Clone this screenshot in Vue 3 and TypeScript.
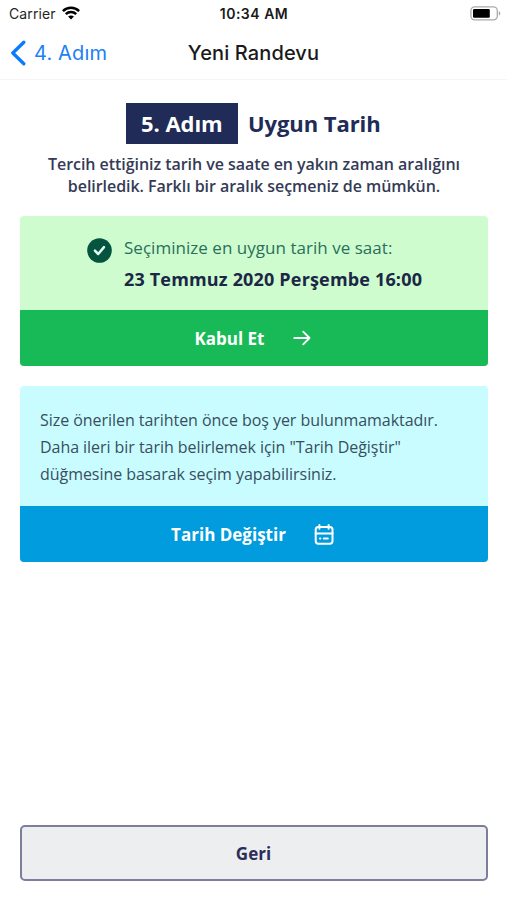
<script setup lang="ts">
interface Step {
  previous: string
  current: string
  title: string
}

const step: Step = { previous: '4. Adım', current: '5. Adım', title: 'Uygun Tarih' }
const introLines: string[] = [
  'Tercih ettiğiniz tarih ve saate en yakın zaman aralığını',
  'belirledik. Farklı bir aralık seçmeniz de mümkün.',
]
const noticeLines: string[] = [
  'Size önerilen tarihten önce boş yer bulunmamaktadır.',
  'Daha ileri bir tarih belirlemek için "Tarih Değiştir"',
  'düğmesine basarak seçim yapabilirsiniz.',
]
const suggestedDate = '23 Temmuz 2020 Perşembe 16:00'
</script>

<template>
  <div class="screen">
    <header class="top">
      <div class="status">
        <div class="carrier">
          <span>Carrier</span>
          <svg class="wifi" width="18" height="14" viewBox="0 0 18 14" fill="none" stroke="#000" stroke-width="2.5">
            <path d="M0.9 5.1C5.4 0.6 12.6 0.6 17.1 5.1" />
            <path d="M3.8 8.1C6.7 5.3 11.3 5.3 14.2 8.1" />
            <path d="M9 13.5L6.1 10.6C7.7 9.1 10.3 9.1 11.9 10.6Z" fill="#000" stroke="none" />
          </svg>
        </div>
        <span class="clock">10:34 AM</span>
        <div class="power">
          <svg width="31" height="15" viewBox="0 0 31 15">
            <rect x="0.9" y="0.9" width="26.4" height="13" rx="3.8" fill="#fff" stroke="#aaa" stroke-width="1.3" />
            <rect x="3" y="3" width="16.8" height="8.8" rx="1.3" fill="#000" />
            <path d="M28.8 5.2C30.8 5.8 30.8 9 28.8 9.6Z" fill="#aaa" />
          </svg>
        </div>
      </div>
      <nav class="nav">
        <a class="back">
          <svg width="16" height="26" viewBox="0 0 16 26" fill="none" stroke="#0a7aff" stroke-width="3.3" stroke-linecap="round" stroke-linejoin="round">
            <path d="M13.8 2.2L2.8 13L13.8 23.8" />
          </svg>
          <span>{{ step.previous }}</span>
        </a>
        <span class="nav-title">Yeni Randevu</span>
      </nav>
    </header>

    <main class="content">
      <h1 class="heading">
        <span class="badge">{{ step.current }}</span>
        <span class="heading-text">{{ step.title }}</span>
      </h1>
      <p class="intro">
        <span v-for="line in introLines" :key="line">{{ line }}</span>
      </p>

      <section class="card accept">
        <div class="suggestion">
          <svg class="check" width="25" height="25" viewBox="0 0 25 25" fill="none">
            <circle cx="12.5" cy="12.5" r="12.3" fill="#04543f" />
            <path d="M7.9 12.7L11.2 16L17 9.1" stroke="#e4fff0" stroke-width="2.5" stroke-linecap="round" stroke-linejoin="round" />
          </svg>
          <div class="suggestion-text">
            <span class="label">Seçiminize en uygun tarih ve saat:</span>
            <strong class="date">{{ suggestedDate }}</strong>
          </div>
        </div>
        <button class="action" type="button">
          <span class="accept-label">Kabul Et</span>
          <svg width="18" height="16" viewBox="0 0 18 16" fill="none" stroke="#fff" stroke-width="1.9" stroke-linecap="round" stroke-linejoin="round">
            <path d="M1.3 8H16.3M10.2 1.7L16.5 8L10.2 14.3" />
          </svg>
        </button>
      </section>

      <section class="card change">
        <p class="notice">
          <span v-for="line in noticeLines" :key="line">{{ line }}</span>
        </p>
        <button class="action" type="button">
          <span class="change-label">Tarih Değiştir</span>
          <svg width="20" height="21" viewBox="0 0 20 21" fill="none" stroke="#fff" stroke-width="2" stroke-linecap="round" stroke-linejoin="round">
            <rect x="1.7" y="2.9" width="16.8" height="16.8" rx="2.6" />
            <path d="M1.7 9.5H18.5M5.4 1.1V4.8M14.6 1.1V4.8" />
            <path d="M6 14.4H6.4M9.8 14.4H13.8" />
          </svg>
        </button>
      </section>

      <button class="return" type="button">Geri</button>
    </main>
  </div>
</template>

<style>
body {
  margin: 0;
  background: #fff;
}
</style>

<style scoped>
.screen {
  display: flex;
  flex-direction: column;
  box-sizing: border-box;
  height: 900px;
  background: #fff;
  font-family: 'Open Sans', 'Noto Sans', sans-serif;
  color: #202b57;
}
.top {
  box-sizing: border-box;
  height: 80px;
  border-bottom: 1px solid #f5f5f5;
  font-family: Inter, 'Liberation Sans', sans-serif;
  color: #1a1a1a;
}
.status {
  display: grid;
  grid-template-columns: 1fr auto 1fr;
  align-items: center;
  height: 27px;
  padding: 0 6px 0 9px;
  font-size: 14px;
}
.carrier {
  display: flex;
  align-items: center;
  gap: 6px;
  letter-spacing: 0.1px;
  color: #262626;
}
.wifi {
  margin-top: -2px;
}
.clock {
  margin-right: 2px;
  font-weight: 600;
  letter-spacing: 0.5px;
}
.power {
  display: flex;
  justify-content: flex-end;
}
.nav {
  display: grid;
  grid-template-columns: 1fr auto 1fr;
  align-items: center;
  height: 52px;
  padding: 0 10px;
}
.back {
  display: flex;
  align-items: center;
  gap: 8px;
  font-size: 20px;
  letter-spacing: 0.15px;
  color: #1d80f5;
}
.nav-title {
  font-size: 20px;
  font-weight: 500;
  letter-spacing: 0.12px;
}
.content {
  display: flex;
  flex: 1;
  flex-direction: column;
  padding: 23px 19px 19px 20px;
}
.heading {
  display: flex;
  align-items: center;
  justify-content: center;
  gap: 10px;
  margin: 0;
  padding-right: 1.5px;
  font-size: 22px;
  font-weight: 700;
  line-height: 41px;
  letter-spacing: -0.06px;
}
.badge {
  width: 112px;
  background: #202b57;
  color: #fff;
  text-align: center;
}
.intro {
  display: flex;
  flex-direction: column;
  align-items: center;
  margin: 9px 0 19px;
  font-size: 16px;
  font-weight: 600;
  line-height: 22px;
  letter-spacing: -0.05px;
  color: #353b56;
}
.card {
  display: flex;
  flex-direction: column;
  border-radius: 4px;
  overflow: hidden;
}
.accept {
  height: 150px;
  background: #cffccf;
}
.change {
  height: 176px;
  margin-top: 20px;
  background: #c9fcff;
}
.suggestion {
  display: flex;
  flex: 1;
  gap: 12px;
  padding: 17px 0 0 67px;
}
.check {
  margin-top: 5px;
}
.suggestion-text {
  display: flex;
  flex-direction: column;
  line-height: 31px;
}
.label {
  margin: -1px 0 1px;
  font-size: 17px;
  letter-spacing: 0.03px;
  color: #28705a;
}
.date {
  font-size: 18px;
  font-weight: 700;
  letter-spacing: 0.17px;
  color: #1b2745;
}
.action {
  display: flex;
  align-items: center;
  justify-content: center;
  gap: 28px;
  height: 56px;
  padding: 0 3px 0 0;
  border: 0;
  font: 700 17px 'Open Sans', 'Noto Sans', sans-serif;
  color: #fff;
}
.accept .action {
  background: #17ba56;
}
.change .action {
  background: #009cde;
}
.notice {
  display: flex;
  flex: 1;
  flex-direction: column;
  margin: 0;
  padding: 21px 20px 0;
  font-size: 16px;
  line-height: 27px;
  letter-spacing: -0.05px;
  color: #374f60;
}
.return {
  height: 56px;
  margin-top: auto;
  padding: 0 1px 0 0;
  border: 2px solid #7d7e9b;
  border-radius: 5px;
  background: #eceef0;
  font: 700 17px 'Open Sans', 'Noto Sans', sans-serif;
  color: #2c2d59;
}
</style>
